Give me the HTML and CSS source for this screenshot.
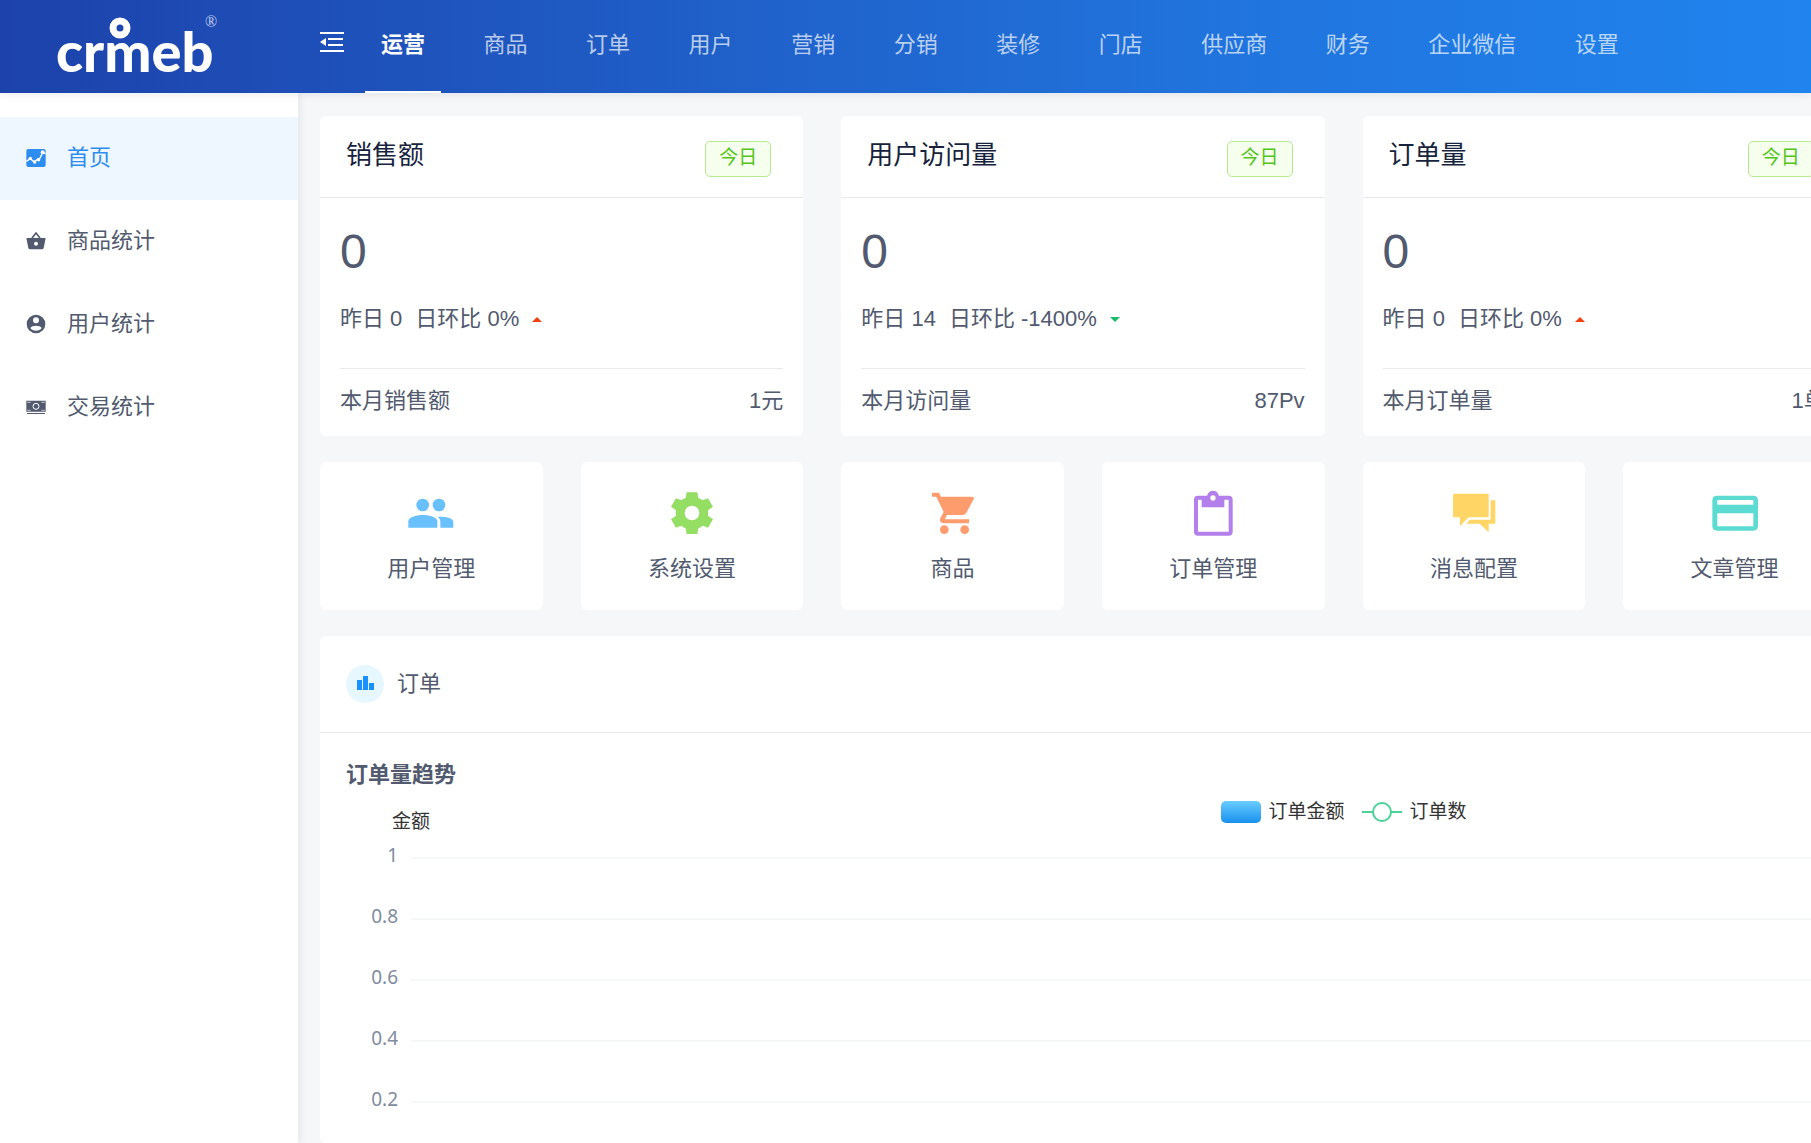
FILE: index.html
```html
<!DOCTYPE html>
<html lang="zh-CN">

<head>
    <meta charset="UTF-8">
    <meta name="viewport" content="width=device-width, initial-scale=1.0">
    <title>首页</title>
    <link rel="stylesheet" href="styles.css">
</head>

<body>
    <header class="header">
        <a class="logo" href="#" aria-label="crmeb">
            <svg width="170" height="92" viewBox="0 0 170 92">
                <text class="logo-text" x="1" y="72">crmeb</text>
                <circle cx="65" cy="28" r="7" fill="none" stroke="#fff" stroke-width="7" />
                <text class="logo-mark" x="150" y="27">®</text>
            </svg>
        </a>
        <button class="collapse" type="button" aria-label="收起菜单">
            <svg width="24" height="22" viewBox="0 0 24 22">
                <path d="M0 0h24v2H0zM8 6h15v2H8zM8 12h15v2H8zM0 18h24v2H0zM0 10l6-4v8z" fill="#fff" />
            </svg>
        </button>
        <nav class="nav">
            <a class="active" href="#">运营</a>
            <a href="#">商品</a>
            <a href="#">订单</a>
            <a href="#">用户</a>
            <a href="#">营销</a>
            <a href="#">分销</a>
            <a href="#">装修</a>
            <a href="#">门店</a>
            <a href="#">供应商</a>
            <a href="#">财务</a>
            <a href="#">企业微信</a>
            <a href="#">设置</a>
        </nav>
    </header>

    <div class="layout">
        <aside class="sidebar">
            <a class="active" href="#">
                <svg width="20" height="20" viewBox="-30 -30 60 60">
                    <rect x="-29" y="-27" width="58" height="54" rx="6" fill="currentColor" />
                    <g fill="#fff">
                        <path d="M-29 10L-17 2L-5 12L5 3L8 8L20 -16L29 -13" fill="none" stroke="#fff" stroke-width="4" />
                        <circle cx="-17" cy="1" r="5" />
                        <circle cx="-4" cy="12" r="5" />
                        <circle cx="8" cy="5" r="5" />
                        <circle cx="20" cy="-17" r="6" />
                    </g>
                </svg>
                首页
            </a>
            <a href="#">
                <svg width="20" height="20" viewBox="-30 -30 60 60">
                    <path d="M-29 -9h58l-6 30q-1 4-5 4h-36q-4 0-5-4z" fill="currentColor" />
                    <path d="M-12 -9L0 -24L12 -9" fill="none" stroke="currentColor" stroke-width="5" />
                    <circle cx="0" cy="8" r="6" fill="#fff" />
                </svg>
                商品统计
            </a>
            <a href="#">
                <svg width="20" height="20" viewBox="-30 -30 60 60">
                    <circle r="28" fill="currentColor" />
                    <circle cy="-11" r="9" fill="#fff" />
                    <path d="M-17 12C-12 3 12 3 17 12C10 23-10 23-17 12z" fill="#fff" />
                </svg>
                用户统计
            </a>
            <a href="#">
                <svg width="20" height="20" viewBox="-30 -30 60 60">
                    <path d="M-29 -19h58v33h-58zM-27 18h54v3h-54z" fill="currentColor" />
                    <circle cy="-2" r="9" fill="none" stroke="#fff" stroke-width="3" />
                    <path d="M-26 -14h10M16 -14h10M-26 10h10M16 10h10" stroke="#fff" stroke-width="2" />
                </svg>
                交易统计
            </a>
        </aside>

        <main class="main">
            <div class="board">
                <section class="stats">
                    <article class="card">
                        <div class="card-head">
                            <h2>销售额</h2>
                            <span class="tag">今日</span>
                        </div>
                        <div class="card-body">
                            <p class="number">0</p>
                            <p class="compare"><span>昨日 0</span><span>日环比 0%</span><i class="up"></i></p>
                            <p class="total"><span>本月销售额</span><span>1元</span></p>
                        </div>
                    </article>
                    <article class="card">
                        <div class="card-head">
                            <h2>用户访问量</h2>
                            <span class="tag">今日</span>
                        </div>
                        <div class="card-body">
                            <p class="number">0</p>
                            <p class="compare"><span>昨日 14</span><span>日环比 -1400%</span><i class="down"></i></p>
                            <p class="total"><span>本月访问量</span><span>87Pv</span></p>
                        </div>
                    </article>
                    <article class="card">
                        <div class="card-head">
                            <h2>订单量</h2>
                            <span class="tag">今日</span>
                        </div>
                        <div class="card-body">
                            <p class="number">0</p>
                            <p class="compare"><span>昨日 0</span><span>日环比 0%</span><i class="up"></i></p>
                            <p class="total"><span>本月订单量</span><span>1单</span></p>
                        </div>
                    </article>
                </section>

                <section class="shortcuts">
                    <a href="#">
                        <svg width="48" height="48" viewBox="-72 -72 144 144" fill="#69c0ff">
                            <circle cx="-25" cy="-24" r="19" />
                            <circle cx="24" cy="-24" r="19" />
                            <path d="M-68 44V25C-68 13-46 6-24 6S19 14 19 25V44z" />
                            <path d="M20 11C45 10 67 15 67 27V44H28V26C28 20 25 15 20 11z" />
                        </svg>
                        用户管理
                    </a>
                    <a href="#">
                        <svg width="48" height="48" viewBox="-72 -72 144 144" fill="#95de64">
                            <path fill-rule="evenodd" d="M-16 -62H16L19 -45Q27 -43 32 -38L48 -44L63 -19L48 -8Q50 0 48 8L63 19L48 44L32 38Q27 43 19 46L16 63H-16L-19 46Q-27 43 -32 38L-48 44L-63 19L-48 8Q-50 0 -48 -8L-63 -19L-48 -44L-32 -38Q-27 -43 -19 -45zM0 -22A22 22 0 1 0 0 22A22 22 0 1 0 0 -22z" />
                        </svg>
                        系统设置
                    </a>
                    <a href="#">
                        <svg width="48" height="48" viewBox="-72 -72 144 144" fill="#ff9c6e">
                            <path d="M-63 -61h21l6 12h94q7 2 4 8l-22 40q-4 7-11 7h-47l-6 11q0 2 2 2h70v12h-75c-11 0-14-8-11-15l10-19l-22-46h-13z" />
                            <circle cx="-26" cy="50" r="13" />
                            <circle cx="35" cy="50" r="13" />
                        </svg>
                        商品
                    </a>
                    <a href="#">
                        <svg width="48" height="48" viewBox="-72 -72 144 144" fill="#b37feb">
                            <rect x="-51" y="-46" width="104" height="108" rx="6" fill="none" stroke="#b37feb" stroke-width="12" />
                            <path d="M-34 -50H-18C-14 -72 14 -72 18 -50H34V-17H-34z" />
                            <circle cy="-45" r="8" fill="#fff" />
                        </svg>
                        订单管理
                    </a>
                    <a href="#">
                        <svg width="48" height="48" viewBox="-72 -72 144 144" fill="#ffd666">
                            <path d="M-60 -58H42L44 -56V11L42 13H-16L-42 39V13H-61L-63 11V-56z" />
                            <path d="M50 -38H64V32H44V58L17 32H-23L-12 20H48L50 18z" />
                        </svg>
                        消息配置
                    </a>
                    <a href="#">
                        <svg width="48" height="48" viewBox="-72 -72 144 144" fill="#5cdbd3">
                            <path fill-rule="evenodd" d="M-54 -52H55Q69 -52 69 -38V39Q69 53 55 53H-54Q-68 53 -68 39V-38Q-68 -52 -54 -52zM-53 -39V-25H55V-39zM-53 1V40H55V1z" />
                        </svg>
                        文章管理
                    </a>
                </section>

                <section class="panel">
                    <div class="panel-head">
                        <span class="round">
                            <svg width="18" height="18" viewBox="0 0 18 18" fill="#1890ff">
                                <path d="M1 5h5v10H1zM7 1h5v14H7zM13 8h5v7h-5z" />
                            </svg>
                        </span>
                        订单
                    </div>
                    <div class="chart">
                        <h3>订单量趋势</h3>
                        <div class="chart-top">
                            <span class="unit">金额</span>
                            <div class="legend">
                                <span class="legend-item"><i class="bar"></i>订单金额</span>
                                <span class="legend-item">
                                    <svg width="40" height="22" viewBox="0 0 40 22" fill="none" stroke="#4bd396" stroke-width="2">
                                        <path d="M0 11h11M29 11h11" />
                                        <circle cx="20" cy="11" r="9" />
                                    </svg>
                                    订单数
                                </span>
                            </div>
                        </div>
                        <ul class="axis">
                            <li><span>1</span></li>
                            <li><span>0.8</span></li>
                            <li><span>0.6</span></li>
                            <li><span>0.4</span></li>
                            <li><span>0.2</span></li>
                        </ul>
                    </div>
                </section>
            </div>
        </main>
    </div>
</body>

</html>
```

FILE: styles.css
```css
* {
    box-sizing: border-box;
}

body {
    margin: 0;
    height: 100vh;
    display: flex;
    flex-direction: column;
    overflow: hidden;
    background-color: #f5f7f9;
    color: #515a6e;
    font-family: "Liberation Sans", "Noto Sans CJK SC", sans-serif;
    font-size: 22px;
    line-height: 34px;
}

h2,
h3,
p,
ul {
    margin: 0;
    padding: 0;
}

a {
    color: inherit;
    text-decoration: none;
}

svg {
    display: block;
    flex: none;
}

/* header */
.header {
    position: relative;
    z-index: 2;
    flex: none;
    display: flex;
    height: 93px;
    background: linear-gradient(90deg, #1d42ab, #2173dc, #1e93ff) 0 0 / 132% 100%;
    box-shadow: 0 2px 8px rgba(0, 21, 41, 0.08);
}

.logo {
    width: 320px;
    padding-left: 55px;
}

.logo-text {
    fill: #fff;
    font-family: Lato, sans-serif;
    font-size: 56px;
    font-weight: 900;
}

.logo-mark {
    fill: #c3d0ee;
    font-family: "Liberation Serif", serif;
    font-size: 16px;
}

.collapse {
    width: 24px;
    height: 86px;
    padding: 0;
    border: none;
    background: none;
    cursor: pointer;
}

.nav {
    flex: 1;
    display: flex;
    justify-content: space-between;
    margin-left: 21px;
    margin-right: 176px;
}

.nav a {
    padding: 0 16px 2px;
    line-height: 89px;
    color: rgba(255, 255, 255, 0.7);
    border-bottom: 2px solid transparent;
}

.nav .active {
    color: #fff;
    font-weight: bold;
    border-bottom-color: #fff;
}

/* sidebar */
.layout {
    flex: 1;
    display: flex;
    min-height: 0;
}

.sidebar {
    position: relative;
    z-index: 1;
    flex: none;
    width: 298px;
    padding-top: 24px;
    background-color: #fff;
    box-shadow: 2px 0 8px rgba(29, 35, 41, 0.08);
}

.sidebar a {
    display: flex;
    align-items: center;
    gap: 21px;
    height: 83px;
    padding: 0 26px 2px;
}

.sidebar .active {
    background-color: #eef6ff;
    color: #2d8cf0;
}

/* content */
.main {
    flex: 1;
    min-width: 0;
    display: flex;
    padding: 23px 0 0 22px;
    overflow: hidden;
}

.board {
    flex: none;
    width: 137.3%;
    display: flex;
    flex-direction: column;
    gap: 26px;
}

.stats {
    display: grid;
    grid-template-columns: repeat(4, 1fr);
    gap: 38px;
}

.card,
.shortcuts a,
.panel {
    background-color: #fff;
    border-radius: 6px;
}

.card-head {
    display: flex;
    justify-content: space-between;
    height: 82px;
    padding: 0 32px 0 26px;
    border-bottom: 1px solid #e8eaec;
}

.card-head h2 {
    color: #17233d;
    font-size: 26px;
    font-weight: normal;
    line-height: 78px;
}

.tag {
    height: 36px;
    margin-top: 25px;
    padding: 0 13px;
    border: 1px solid #b7eb8f;
    border-radius: 5px;
    background-color: #f6ffed;
    color: #52c41a;
    font-size: 19px;
    line-height: 32px;
}

.card-body {
    padding: 29px 20px 3px;
}

.number {
    font-size: 48px;
    line-height: 50px;
}

.compare {
    display: flex;
    align-items: center;
    gap: 13px;
    margin: 25px 0 32px;
}

.up,
.down {
    border: 5px solid transparent;
}

.up {
    border-top: none;
    border-bottom-color: #f5400f;
}

.down {
    border-bottom: none;
    border-top-color: #19be6b;
}

.total {
    display: flex;
    justify-content: space-between;
    border-top: 1px solid #e8eaec;
    line-height: 64px;
}

.shortcuts {
    display: grid;
    grid-template-columns: repeat(8, 1fr);
    gap: 38px;
}

.shortcuts a {
    display: flex;
    flex-direction: column;
    align-items: center;
    gap: 15px;
    height: 148px;
    padding-top: 27px;
}

/* order chart */
.panel {
    flex: 1;
}

.panel-head {
    display: flex;
    align-items: center;
    gap: 13px;
    height: 97px;
    padding: 0 26px;
    border-bottom: 1px solid #e8eaec;
}

.round {
    display: flex;
    align-items: center;
    justify-content: center;
    width: 38px;
    height: 38px;
    border-radius: 50%;
    background-color: #e6f7ff;
}

.chart {
    padding: 27px 26px 0;
}

.chart h3 {
    font-size: 22px;
    line-height: 30px;
}

.chart-top {
    display: grid;
    grid-template-columns: 1fr auto 1fr;
    height: 43px;
    color: #333;
    font-size: 19px;
    line-height: 22px;
}

.unit {
    align-self: end;
    padding-left: 46px;
}

.legend,
.legend-item {
    display: flex;
    align-items: center;
}

.legend {
    gap: 17px;
}

.legend-item {
    gap: 8px;
}

.bar {
    width: 40px;
    height: 22px;
    border-radius: 5px;
    background: linear-gradient(#69cdff, #1890ed);
}

.axis {
    display: flex;
    flex-direction: column;
    gap: 41px;
    margin-top: 12px;
    list-style: none;
    color: #7f8c9f;
    font-family: "Noto Sans", sans-serif;
    font-size: 19px;
    line-height: 20px;
}

.axis li {
    display: flex;
    align-items: flex-end;
    gap: 13px;
}

.axis span {
    width: 52px;
    text-align: right;
}

/* grid line next to each value */
.axis li::after {
    content: "";
    flex: 1;
    height: 2px;
    margin-bottom: 6px;
    background-color: #f5f7f9;
}
```
